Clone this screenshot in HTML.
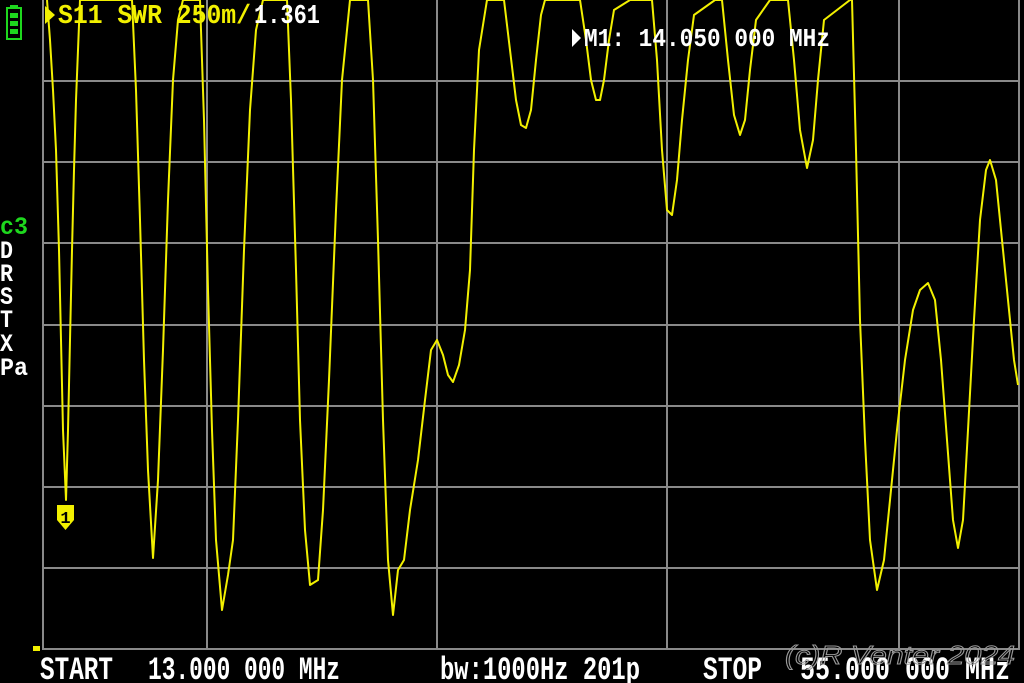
<!DOCTYPE html>
<html><head><meta charset="utf-8"><style>
html,body{margin:0;padding:0;background:#000;width:1024px;height:683px;overflow:hidden}
svg{display:block}
</style></head><body>
<svg width="1024" height="683" viewBox="0 0 1024 683" xmlns="http://www.w3.org/2000/svg">
<rect width="1024" height="683" fill="#000"/>
<g stroke="#8a8a8a" stroke-width="2" fill="none">
<line x1="43" y1="0" x2="43" y2="650"/>
<line x1="207" y1="0" x2="207" y2="650"/>
<line x1="437" y1="0" x2="437" y2="650"/>
<line x1="667" y1="0" x2="667" y2="650"/>
<line x1="899" y1="0" x2="899" y2="650"/>
<line x1="1019" y1="0" x2="1019" y2="650"/>
<line x1="43" y1="81" x2="1019" y2="81"/>
<line x1="43" y1="162" x2="1019" y2="162"/>
<line x1="43" y1="243" x2="1019" y2="243"/>
<line x1="43" y1="325" x2="1019" y2="325"/>
<line x1="43" y1="406" x2="1019" y2="406"/>
<line x1="43" y1="487" x2="1019" y2="487"/>
<line x1="43" y1="568" x2="1019" y2="568"/>
<line x1="43" y1="649" x2="1019" y2="649"/>
</g>
<polyline fill="none" stroke="#f2f000" stroke-width="2" stroke-linejoin="round" points="
47,0 50,40 53,90 56,150 59,250 61,340 63,430 66,500 68,430 70,340 72,250 74,170 76,100 78,50 80,0
132,0 136,90 140,220 144,360 148,470 153,558 158,480 163,350 168,200 173,80 178,20 183,0
200,0 204,120 208,290 212,430 216,540 222,610 228,575 233,540 238,420 244,250 250,110 256,30 263,0
287,0 291,100 296,270 300,420 305,530 310,585 318,580 323,510 329,380 336,210 342,80 350,0
368,0 373,80 378,240 383,420 388,560 393,615 398,570 404,560 410,510 418,460 425,400 431,350 437,340 443,355 448,375 453,382 459,365 465,330 470,270 474,150 479,50 487,0
504,0 510,50 516,100 521,125 526,128 531,110 536,60 541,15 545,0
580,0 586,40 591,80 596,100 600,100 604,80 609,40 614,10 630,0
652,0 657,60 662,150 667,210 672,215 677,180 682,120 688,60 694,15 715,0
722,0 728,60 734,115 740,135 745,120 750,70 756,20 770,0
788,0 794,60 800,130 807,168 813,140 818,80 824,20 850,0
852,0 856,150 860,320 865,440 870,540 877,590 884,560 890,500 897,430 905,360 913,310 920,290 928,283 935,300 941,360 947,440 953,520 958,548 963,520 968,430 974,320 980,220 986,170 990,160 996,180 1002,240 1008,300 1014,360 1018,385"/>
<path d="M57,505 h17 v15 l-8.5,10 l-8.5,-10 z" fill="#f2f000"/>
<text x="65.5" y="523" font-family="Liberation Mono, monospace" font-weight="bold" font-size="17" fill="#000" text-anchor="middle">1</text>
<path d="M33,646 h7 v5 h-7 z" fill="#f2f000"/>
<g fill="none" stroke="#1ed81e" stroke-width="2"><rect x="7" y="8" width="14" height="31"/></g>
<rect x="10" y="5" width="8" height="3" fill="#1ed81e"/>
<rect x="10" y="13" width="8" height="5" fill="#1ed81e"/>
<rect x="10" y="21" width="8" height="5" fill="#1ed81e"/>
<rect x="10" y="29" width="8" height="5" fill="#1ed81e"/>
<path d="M45,6 l10,9 l-10,9 z" fill="#f2f000"/>
<text x="58" y="23" font-family="Liberation Mono, monospace" font-weight="bold" font-size="27" fill="#f2f000" textLength="193" lengthAdjust="spacingAndGlyphs">S11 SWR 250m/</text>
<text x="254" y="23" font-family="Liberation Mono, monospace" font-weight="bold" font-size="27" fill="#fff" textLength="66" lengthAdjust="spacingAndGlyphs">1.361</text>
<path d="M572,29 l9,9 l-9,9 z" fill="#fff"/>
<text x="584" y="46" font-family="Liberation Mono, monospace" font-weight="bold" font-size="26" fill="#fff" textLength="246" lengthAdjust="spacingAndGlyphs">M1: 14.050 000 MHz</text>
<g font-family="Liberation Mono, monospace" font-weight="bold" font-size="25">
<text x="0" y="234" fill="#1ed81e" textLength="28" lengthAdjust="spacingAndGlyphs">c3</text>
<text x="0" y="258" fill="#fff" textLength="13" lengthAdjust="spacingAndGlyphs">D</text>
<text x="0" y="281" fill="#fff" textLength="13" lengthAdjust="spacingAndGlyphs">R</text>
<text x="0" y="304" fill="#fff" textLength="13" lengthAdjust="spacingAndGlyphs">S</text>
<text x="0" y="327" fill="#fff" textLength="13" lengthAdjust="spacingAndGlyphs">T</text>
<text x="0" y="351" fill="#fff" textLength="13" lengthAdjust="spacingAndGlyphs">X</text>
<text x="0" y="375" fill="#fff" textLength="28" lengthAdjust="spacingAndGlyphs">Pa</text>
</g>
<g font-family="Liberation Mono, monospace" font-weight="bold" font-size="32" fill="#fff">
<text x="40" y="679" textLength="73" lengthAdjust="spacingAndGlyphs">START</text>
<text x="148" y="679" textLength="192" lengthAdjust="spacingAndGlyphs">13.000 000 MHz</text>
<text x="440" y="679" textLength="200" lengthAdjust="spacingAndGlyphs">bw:1000Hz 201p</text>
<text x="703" y="679" textLength="59" lengthAdjust="spacingAndGlyphs">STOP</text>
<text x="800" y="679" textLength="210" lengthAdjust="spacingAndGlyphs">55.000 000 MHz</text>
</g>
<text x="785" y="664" font-family="Liberation Sans, sans-serif" font-style="italic" font-size="26" fill="none" stroke="#999" stroke-width="1" textLength="230" lengthAdjust="spacingAndGlyphs">(c)R Venter 2024</text>
</svg>
</body></html>
